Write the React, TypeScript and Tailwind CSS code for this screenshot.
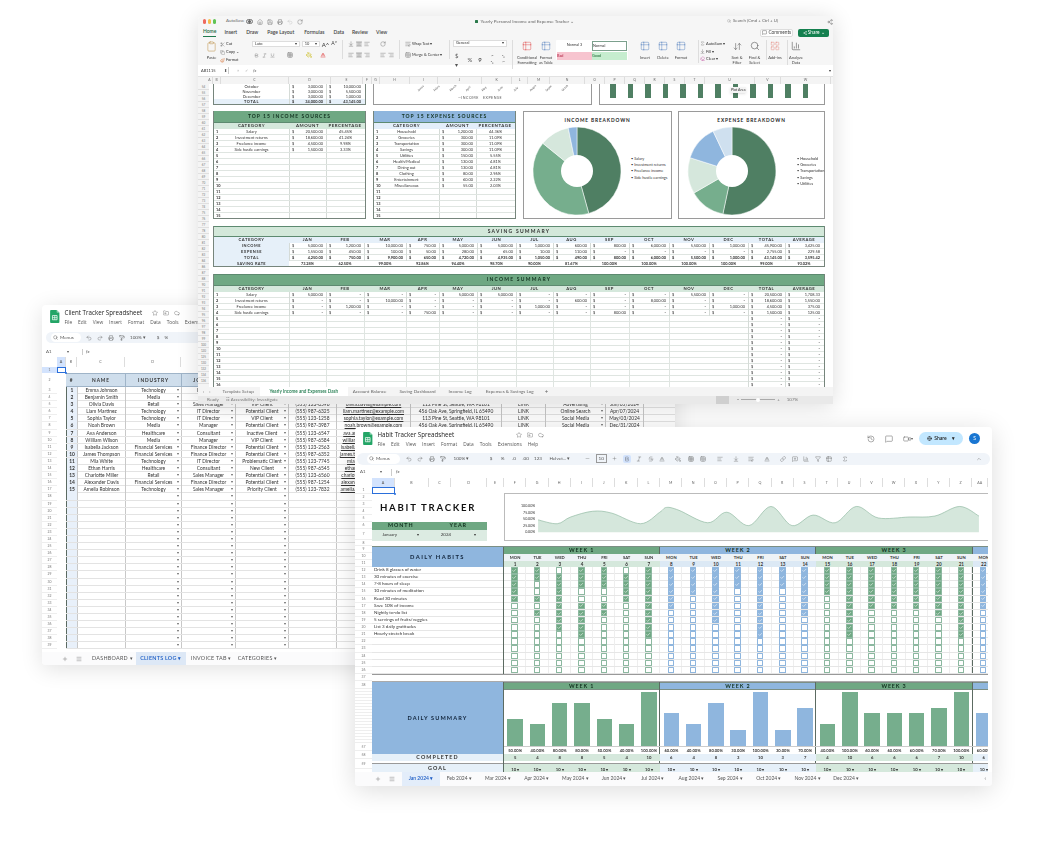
import {
  AlignCenter, AlignLeft, AlignRight, ArrowDownToLine, Baseline, Bold, ChartColumn, ChevronUp, Clipboard, Cloud, Copy, Eraser,
  Filter, FolderInput, Grid3x3, History, House, Italic, Link, Menu, MessageSquare, MessageSquarePlus, Minus, PaintBucket,
  PaintRoller, Paintbrush, Plus, Printer, Redo2, RotateCw, Save, Scissors, Search, Share2, Sigma, Star,
  Strikethrough, Table2, TableCellsMerge, Undo2, Video, WrapText, Check, Globe, ArrowDownUp, LayoutGrid, Underline,
} from "lucide-react";
import React from "react";

const pieSlice = (cx: number, cy: number, r: number, a: number, b: number) => {
  const pt = (d: number) => {
    const t = ((d - 90) * Math.PI) / 180;
    return `${cx + r * Math.cos(t)} ${cy + r * Math.sin(t)}`;
  };
  return `M${cx} ${cy}L${pt(a)}A${r} ${r} 0 ${b - a > 180 ? 1 : 0} 1 ${pt(b)}Z`;
};

// catmull-rom through the points of the area chart
const smooth = (p: number[][]) => {
  let d = `M${p[0][0]} ${p[0][1]}`;
  for (let i = 0; i < p.length - 1; i++) {
    const a = p[Math.max(i - 1, 0)], b = p[i], c = p[i + 1], e = p[Math.min(i + 2, p.length - 1)];
    d += `C${b[0] + (c[0] - a[0]) / 6} ${b[1] + (c[1] - a[1]) / 6} ${c[0] - (e[0] - b[0]) / 6} ${c[1] - (e[1] - b[1]) / 6} ${c[0]} ${c[1]}`;
  }
  return d;
};

function SheetsLogo({ className }: { className: string }) {
  return (
    <svg viewBox="0 0 20 28" className={className}>
      <path d="M2 0h12l6 6v20a2 2 0 0 1-2 2H2a2 2 0 0 1-2-2V2a2 2 0 0 1 2-2z" fill="#23a566" />
      <path d="M14 0l6 6h-4a2 2 0 0 1-2-2z" fill="#8ed1b1" />
      <path d="M5 12h10v9H5z" fill="none" stroke="#fff" strokeWidth="1.6" />
      <path d="M10 12v9M5 16.5h10" stroke="#fff" strokeWidth="1.4" />
    </svg>
  );
}

function Money({ v, b }: { v?: string; b?: boolean }) {
  return (
    <div className={`flex justify-between border-l border-[#d5dbd7] px-[2px] ${b ? "font-bold" : ""}`}>
      <span>$</span>
      <span className="pr-[1px]">{v ?? "-"}</span>
    </div>
  );
}

const excelCols: [string, number][] = [["A", 6], ["B", 8], ["C", 68], ["D", 42], ["E", 32], ["F", 9], ["G", 8], ["H", 30], ["I", 28], ["J", 44], ["K", 30], ["L", 16], ["M", 22], ["N", 35], ["O", 20], ["P", 20], ["Q", 20], ["R", 20], ["S", 20], ["T", 20], ["U", 50], ["V", 26], ["W", 50]];
const excelRows = [54, 55, 56, 57, 58, 59, 60, 61, 62, 63, 64, 65, 66, 67, 68, 69, 70, 71, 72, 73, 74, 75, 76, 77, 78, 80, 81, 82, 83, 84, 86, 87, 88, 90, 91, 92, 93, 94, 95, 96, 97, 98, 99, 100, 120, 125, 130, 132, 134, 136];
const months = ["JAN", "FEB", "MAR", "APR", "MAY", "JUN", "JUL", "AUG", "SEP", "OCT", "NOV", "DEC"];
const summaryGrid = "grid grid-cols-[75px_37px_38px_42px_33px_38px_39px_37px_37px_39px_40px_40px_39px_37px_38px]";
const rowLine = "h-[6px] border-b border-[#dfe5e1] leading-[5.5px]";

const incomeTop = [["Salary", "20,500.00", "45.45%"], ["Investment returns", "18,600.00", "41.24%"], ["Freelance income", "4,500.00", "9.98%"], ["Side hustle earnings", "1,500.00", "3.33%"]];
const expenseTop = [["Household", "1,200.00", "44.36%"], ["Groceries", "300.00", "11.09%"], ["Transportation", "300.00", "11.09%"], ["Savings", "300.00", "11.09%"], ["Utilities", "150.00", "5.55%"], ["Health/Medical", "130.00", "4.81%"], ["Dining out", "130.00", "4.81%"], ["Clothing", "80.00", "2.96%"], ["Entertainment", "60.00", "2.22%"], ["Miscellaneous", "55.00", "2.03%"]];

const savingRows: [string, string[]][] = [
  ["INCOME", ["5,000.00", "1,200.00", "10,000.00", "750.00", "5,000.00", "5,000.00", "1,000.00", "600.00", "800.00", "6,000.00", "5,500.00", "1,000.00", "45,900.00", "3,425.00"]],
  ["EXPENSE", ["1,550.00", "450.00", "100.00", "50.00", "280.00", "65.00", "10.00", "110.00", "-", "-", "-", "-", "2,755.00", "229.58"]],
  ["TOTAL", ["4,250.00", "750.00", "9,900.00", "650.00", "4,720.00", "4,935.00", "1,050.00", "490.00", "800.00", "6,000.00", "5,500.00", "1,000.00", "43,145.00", "3,595.42"]],
];
const savingRate = ["73.28%", "62.50%", "99.00%", "92.86%", "94.40%", "98.70%", "90.00%", "81.67%", "100.00%", "100.00%", "100.00%", "100.00%", "99.00%", "93.02%"];
const incomeRows: [string, Record<number, string>][] = [
  ["Salary", { 0: "5,000.00", 4: "5,000.00", 5: "5,000.00", 10: "5,500.00", 12: "20,500.00", 13: "1,708.33" }],
  ["Investment returns", { 2: "10,000.00", 7: "600.00", 9: "8,000.00", 12: "18,600.00", 13: "1,550.00" }],
  ["Freelance income", { 1: "1,200.00", 6: "1,000.00", 11: "1,000.00", 12: "4,500.00", 13: "375.00" }],
  ["Side hustle earnings", { 3: "750.00", 8: "800.00", 12: "1,500.00", 13: "125.00" }],
];

function TopTable({ title, rows, wide, blue }: { title: string; rows: string[][]; wide?: boolean; blue?: boolean }) {
  const cols = wide ? "grid grid-cols-[75px_37px_38px]" : "grid grid-cols-[65px_37px_38px]";
  return (
    <div className={`h-[108px] shrink-0 overflow-hidden border-x-[1.5px] border-b-[1.5px] border-[#76857c] ${wide ? "w-[153px]" : "w-[143px]"}`}>
      <div className={`flex h-[12px] items-center justify-center border-b border-[#5d8a70] text-[5px] font-bold tracking-[0.2em] text-[#12321f] ${blue ? "bg-[#8fb6de]" : "bg-[#6fa883]"}`}>{title}</div>
      <div className={`${cols} h-[5.5px] text-center text-[4.4px] font-bold leading-[5.5px] tracking-[0.12em] text-[#333] ${blue ? "bg-[#e3eefa]" : "bg-[#d5e8dc]"}`}>
        <div>CATEGORY</div><div>AMOUNT</div><div>PERCENTAGE</div>
      </div>
      {Array.from({ length: 15 }, (_, i) => (
        <div key={i} className={`${cols} ${rowLine}`}>
          <div className="relative text-center">
            <span className="absolute left-[2px] font-bold">{i + 1}</span>
            {rows[i]?.[0] ?? ""}
          </div>
          {rows[i] ? <Money v={rows[i][1]} /> : <div className="border-l border-[#d5dbd7]" />}
          <div className="border-l border-[#d5dbd7] text-center">{rows[i]?.[2] ?? ""}</div>
        </div>
      ))}
    </div>
  );
}

function Pie({ title, cx, slices, legend, wide }: { title: string; cx: number; slices: [number, number, string][]; legend: string[]; wide: number }) {
  return (
    <div className="relative h-[108px] shrink-0 border-[1.5px] border-[#9a9a9a] bg-white" style={{ width: wide }}>
      <div className="pt-[5px] text-center text-[4.8px] font-bold tracking-[0.18em] text-[#222]">{title}</div>
      <svg viewBox="0 0 92 92" className="absolute left-[7px] top-[13px] h-[92px] w-[92px]">
        {slices.map(([a, b, c], i) => (
          <path key={i} d={pieSlice(46, 46, 44, a, b)} fill={c} stroke="#fff" strokeWidth="0.5" />
        ))}
        <circle cx="46" cy="46" r="16" fill="#fff" />
      </svg>
      <div className="absolute top-[44px] whitespace-nowrap text-[3.8px] leading-[6.2px] text-[#333]" style={{ left: cx }}>
        {legend.map((l) => <div key={l}>• {l}</div>)}
      </div>
    </div>
  );
}

function SmallBtn({ icon: I, size = 6, cls = "" }: { icon: React.ElementType; size?: number; cls?: string }) {
  return <I size={size} strokeWidth={1.4} className={`shrink-0 text-[#555] ${cls}`} />;
}

function RibbonBig({ label, cls, children }: { label: string; cls: string; children: React.ReactNode }) {
  return (
    <div className={`flex shrink-0 flex-col items-center text-center text-[4px] leading-[5px] text-[#444] ${cls}`}>
      <div className="flex h-[12px] items-center justify-center">{children}</div>
      <div className="mt-[3px]">{label}</div>
    </div>
  );
}

function Excel() {
  return (
    <div className="absolute left-[198px] top-[16px] z-10 h-[388px] w-[635px] overflow-hidden rounded-t-[5px] bg-white [font-family:Lato,sans-serif] text-[3.9px] text-[#333] shadow-[0_2px_22px_rgba(0,0,0,0.14)] blur-[0.4px]">
      {/* title bar */}
      <div className="relative flex h-[11px] items-center whitespace-nowrap bg-[#f6f6f6] pl-[5px] text-[4.4px] text-[#666]">
        <span className="size-[5px] rounded-full bg-[#ee6a5e]" />
        <span className="ml-[2.5px] size-[5px] rounded-full bg-[#f5bd4f]" />
        <span className="ml-[2.5px] size-[5px] rounded-full bg-[#61c454]" />
        <span className="ml-[10px]">AutoSave</span>
        <span className="ml-[2px] flex h-[5px] w-[10px] items-center justify-end rounded-full border border-[#777] bg-[#eee] pr-[0.5px]"><span className="size-[3.5px] rounded-full bg-[#666]" /></span>
        <div className="ml-[4px] flex gap-[4px]">
          <SmallBtn icon={House} /><SmallBtn icon={Save} /><SmallBtn icon={Printer} /><SmallBtn icon={Undo2} cls="opacity-40" /><SmallBtn icon={RotateCw} />
        </div>
        <div className="ml-[172px] flex w-[106px] shrink-0 items-center gap-[2px] text-[4.6px]">
          <span className="size-[3.5px] shrink-0 rounded-[0.5px] bg-[#2b7a4b]" />Yearly Personal Income and Expense Tracker ⌄
        </div>
        <div className="ml-[146px] flex w-[70px] shrink-0 items-center gap-[2px]"><SmallBtn icon={Search} size={4} />Search (Cmd + Ctrl + U)</div>
        <SmallBtn icon={Share2} cls="ml-[30px]" />
      </div>
      {/* ribbon tabs */}
      <div className="flex h-[11px] items-center whitespace-nowrap bg-[#f6f6f6] pl-[5px] text-[5px] font-semibold text-[#444]">
        <span className="border-b border-[#1f7a4d] pb-[0.5px] text-[#1f6a45]">Home</span>
        <span className="ml-[8px]">Insert</span><span className="ml-[9px]">Draw</span><span className="ml-[9px]">Page Layout</span>
        <span className="ml-[10px]">Formulas</span><span className="ml-[9px]">Data</span><span className="ml-[8px]">Review</span><span className="ml-[8px]">View</span>
        <span className="ml-[373px] flex h-[8px] w-[33px] items-center justify-center gap-[1px] rounded-[2px] border border-[#ddd] bg-white text-[4.8px] font-normal"><MessageSquare size={5} />Comments</span>
        <span className="ml-[5px] flex h-[8px] w-[31px] items-center justify-center gap-[1px] rounded-[2px] bg-[#14804f] text-[4.8px] font-normal text-white"><Share2 size={4} />Share ⌄</span>
      </div>
      {/* ribbon */}
      <div className="flex h-[27px] items-start bg-[#f6f6f6] pl-[5px] pt-[2px]">
        <RibbonBig label="Paste" cls="w-[17px]"><Clipboard size={11} strokeWidth={1} className="text-[#b5812f]" /></RibbonBig>
        <div className="w-[26px] shrink-0 text-[4px] leading-[8px]">
          <div className="flex items-center gap-[1px]"><SmallBtn icon={Scissors} size={5} />Cut</div>
          <div className="flex items-center gap-[1px]"><SmallBtn icon={Copy} size={5} />Copy ⌄</div>
          <div className="flex items-center gap-[1px]"><Paintbrush size={5} className="text-[#d9773d]" />Format</div>
        </div>
        <div className="ml-[6px] w-[91px] shrink-0 border-r border-[#ddd] pr-[5px]">
          <div className="flex h-[8px] items-center gap-[2px]">
            <span className="flex h-[6.5px] w-[48px] items-center justify-between border border-[#ddd] bg-white px-[2px]">Lato<span>▾</span></span>
            <span className="flex h-[6.5px] w-[18px] items-center justify-between border border-[#ddd] bg-white px-[2px]">10<span>▾</span></span>
            <span className="text-[6px]">A^</span><span className="text-[5px]">A˅</span>
          </div>
          <div className="mt-[3px] flex h-[8px] items-center gap-[3px] pl-[2px]">
            <SmallBtn icon={Bold} size={5} /><SmallBtn icon={Italic} size={5} /><SmallBtn icon={Underline} size={5} /><SmallBtn icon={Grid3x3} size={6} cls="ml-[9px]" />
            <PaintBucket size={6} className="ml-[10px] text-[#c6b400]" /><Baseline size={6} className="ml-[5px] text-[#d33]" />
          </div>
        </div>
        <div className="ml-[5px] w-[52px] shrink-0 border-r border-[#ddd]">
          <div className="flex h-[8px] items-center gap-[2px]">
            <SmallBtn icon={ArrowDownToLine} size={6} /><span className="bg-[#ddd]"><SmallBtn icon={AlignCenter} size={6} /></span><SmallBtn icon={AlignLeft} size={6} /><SmallBtn icon={RotateCw} size={6} cls="ml-[8px] text-[#3d6fb5]" />
          </div>
          <div className="mt-[3px] flex h-[8px] items-center gap-[2px]">
            <SmallBtn icon={AlignLeft} size={6} /><span className="bg-[#ddd]"><SmallBtn icon={AlignCenter} size={6} /></span><SmallBtn icon={AlignRight} size={6} /><SmallBtn icon={AlignLeft} size={6} cls="ml-[8px]" /><SmallBtn icon={AlignRight} size={6} />
          </div>
        </div>
        <div className="ml-[5px] w-[45px] shrink-0 whitespace-nowrap border-r border-[#ddd] leading-[8px]">
          <div className="flex h-[8px] items-center gap-[1px]"><SmallBtn icon={WrapText} size={6} />Wrap Text ▾</div>
          <div className="mt-[3px] flex h-[8px] items-center gap-[1px]"><SmallBtn icon={TableCellsMerge} size={6} cls="text-[#3d6fb5]" />Merge &amp; Center ▾</div>
        </div>
        <div className="ml-[3px] w-[60px] shrink-0 border-r border-[#ddd] pr-[5px]">
          <div className="flex h-[6.5px] items-center justify-between border border-[#ddd] bg-white px-[2px]">General<span>▾</span></div>
          <div className="mt-[4px] flex items-center gap-[6px] pl-[2px] text-[6px] text-[#555]"><span>$ ▾</span><span>%</span><b>9</b><span className="ml-[3px] text-[4px]">⁺⁰ ⁰₀</span><span className="text-[4px]">⁰₀ ⁺⁰</span></div>
        </div>
        <RibbonBig label="Conditional Formatting" cls="ml-[3px] w-[22px]"><Table2 size={10} strokeWidth={1} className="text-[#d33]" /></RibbonBig>
        <RibbonBig label="Format as Table" cls="w-[16px]"><Table2 size={10} strokeWidth={1} className="text-[#3d6fb5]" /></RibbonBig>
        <div className="ml-[2px] grid h-[20px] w-[72px] shrink-0 grid-cols-2 gap-y-[1px] rounded-[1px] bg-white p-[1px] text-center text-[3.8px] leading-[8px]">
          <div>Normal 3</div><div className="border border-[#7ca08d] text-left">Normal</div>
          <div className="bg-[#f7c4cf] text-left text-[#b02040]">Bad</div><div className="bg-[#c6edcf] text-left text-[#1f6a35]">Good</div>
        </div>
        <RibbonBig label="Insert" cls="ml-[9px] w-[16px]"><Table2 size={10} strokeWidth={1} className="text-[#3d6fb5]" /></RibbonBig>
        <RibbonBig label="Delete" cls="ml-[2px] w-[16px]"><Table2 size={10} strokeWidth={1} className="text-[#3d6fb5]" /></RibbonBig>
        <RibbonBig label="Format" cls="ml-[2px] w-[16px]"><Table2 size={10} strokeWidth={1} className="text-[#3d6fb5]" /></RibbonBig>
        <div className="ml-[9px] w-[28px] shrink-0 whitespace-nowrap border-l border-[#ddd] pl-[1px] text-[4px] leading-[7.5px]">
          <div className="flex items-center gap-[1px]"><SmallBtn icon={Sigma} size={5} />AutoSum ▾</div>
          <div className="flex items-center gap-[1px]"><SmallBtn icon={ArrowDownToLine} size={5} />Fill ▾</div>
          <div className="flex items-center gap-[1px]"><Eraser size={5} className="text-[#c050a0]" />Clear ▾</div>
        </div>
        <RibbonBig label="Sort &amp; Filter" cls="ml-[4px] w-[14px]"><SmallBtn icon={ArrowDownUp} size={9} /></RibbonBig>
        <RibbonBig label="Find &amp; Select" cls="ml-[4px] w-[13px]"><SmallBtn icon={Search} size={10} /></RibbonBig>
        <RibbonBig label="Add-ins" cls="ml-[5px] w-[17px] border-l border-[#ddd]"><LayoutGrid size={10} strokeWidth={1} className="text-[#e2766a]" /></RibbonBig>
        <RibbonBig label="Analyze Data" cls="ml-[4px] w-[17px] border-l border-[#ddd]"><SmallBtn icon={ChartColumn} size={10} /></RibbonBig>
      </div>
      {/* formula bar */}
      <div className="flex h-[12px] items-center border-b border-[#e2e2e2] bg-white pl-[2px] text-[4px]">
        <span className="flex h-[7px] w-[29px] items-center justify-between border-r border-[#ccc] px-[1px]">AB1115 <span>⬍</span></span>
        <span className="ml-[8px] text-[#aaa]">×</span><span className="ml-[6px] text-[#aaa]">✓</span><span className="ml-[5px] italic text-[#666]">fx</span>
        <span className="ml-auto pr-[2px]">▾</span>
      </div>
      {/* column letters */}
      <div className="flex h-[7px] bg-[#f4f4f4] pl-[9px] text-center text-[3.4px] leading-[7px] text-[#666]">
        {excelCols.map(([c, w]) => <div key={c} className="shrink-0 border-r border-[#ddd]" style={{ width: w }}>{c}</div>)}
      </div>
      {/* sheet */}
      <div className="flex h-[303px] overflow-hidden bg-white">
        <div className="w-[11px] shrink-0 bg-[#f4f4f4] text-center text-[3px] leading-[6px] text-[#777]">
          {excelRows.map((n) => <div key={n} className="h-[6px] border-b border-[#e0e0e0]">{n}</div>)}
        </div>
        <div className="w-[616px] shrink-0 pl-[4px]">
          <div className="flex h-[21px]">
            <div className="w-[153px] shrink-0 border-x-[1.5px] border-b-[1.5px] border-[#76857c]">
              {[["October", "3,000.00", "10,000.00"], ["November", "3,000.00", "5,500.00"], ["December", "3,000.00", "1,000.00"]].map((r) => (
                <div key={r[0]} className="grid h-[5px] grid-cols-[75px_37px_38px] leading-[5px]">
                  <div className="text-center">{r[0]}</div><Money v={r[1]} /><Money v={r[2]} />
                </div>
              ))}
              <div className="grid h-[5px] grid-cols-[75px_37px_38px] bg-[#e6f0f9] font-bold leading-[5px]">
                <div className="text-center tracking-[0.15em]">TOTAL</div><Money v="34,000.00" b /><Money v="43,145.00" b />
              </div>
            </div>
            <div className="ml-[7px] flex w-[219px] shrink-0 flex-col border-x-[1.5px] border-b-[1.5px] border-[#999]">
              <div className="flex h-[9px] justify-end gap-[9px] overflow-hidden pr-[22px] pt-[2px] text-[3px] text-[#555]">
                {["January", "February", "March", "April", "May", "June", "July", "August", "September", "October"].map((m) => <span key={m} className="inline-block w-[7px] -rotate-45 whitespace-nowrap">{m.slice(0, 5)}</span>)}
              </div>
              <div className="mt-[2px] pl-[84px] text-[3.6px] tracking-[0.14em] text-[#555]">—INCOME&nbsp;&nbsp;&nbsp;EXPENSE</div>
            </div>
            <div className="relative ml-[7px] flex w-[226px] shrink-0 justify-between border-x-[1.5px] border-b-[1.5px] border-[#999] pl-[10px] pr-[16px]">
              {Array.from({ length: 12 }, (_, i) => <div key={i} className="h-[14px] w-[5.5px] bg-[#4f7f63]" />)}
              <div className="absolute left-[130px] top-[3px] whitespace-nowrap bg-[#f4f4f4] px-[1px] text-[3.6px] leading-[6px] shadow-sm">Plot Area</div>
            </div>
          </div>
          <div className="mt-[6px] flex">
            <TopTable title="TOP 15 INCOME SOURCES" rows={incomeTop} wide />
            <div className="ml-[7px]"><TopTable title="TOP 15 EXPENSE SOURCES" rows={expenseTop} blue /></div>
            <div className="ml-[7px]">
              <Pie title="INCOME BREAKDOWN" cx={107} wide={149} legend={["Salary", "Investment returns", "Freelance income", "Side hustle earnings"]} slices={[[0, 164.5, "#4f7f63"], [164.5, 309, "#76ae8d"], [309, 348.5, "#d5e7dc"], [348.5, 360, "#8fb6de"]]} />
            </div>
            <div className="ml-[6px]">
              <Pie title="EXPENSE BREAKDOWN" cx={118} wide={147} legend={["Household", "Groceries", "Transportation", "Savings", "Utilities"]} slices={[[0, 192, "#4f7f63"], [192, 240, "#76ae8d"], [240, 287.6, "#d5e7dc"], [287.6, 334.6, "#8fb6de"], [334.6, 360, "#cfe0ef"]]} />
            </div>
          </div>
          {/* saving summary */}
          <div className="mt-[7px] h-[41px] w-[612px] overflow-hidden border-x-[1.5px] border-b-[1.5px] border-[#76857c]">
            <div className="flex h-[11px] items-center justify-center border-y border-[#5d8a70] bg-[#d3e8da] text-[5px] font-bold tracking-[0.25em] text-[#333]">SAVING SUMMARY</div>
            <div className={`${summaryGrid} h-[6px] bg-[#e6f0f9] text-center text-[4.2px] font-bold leading-[6px] tracking-[0.12em]`}>
              <div>CATEGORY</div>{months.map((m) => <div key={m}>{m}</div>)}<div>TOTAL</div><div>AVERAGE</div>
            </div>
            {savingRows.map(([n, vals]) => (
              <div key={n} className={`${summaryGrid} ${rowLine}`}>
                <div className="bg-[#e6f0f9] text-center font-bold tracking-[0.15em]">{n}</div>
                {vals.map((v, i) => <Money key={i} v={v} b={n === "TOTAL"} />)}
              </div>
            ))}
            <div className={`${summaryGrid} ${rowLine} font-bold`}>
              <div className="bg-[#e6f0f9] text-center tracking-[0.1em]">SAVING RATE</div>
              {savingRate.map((v, i) => <div key={i} className="text-center">{v}</div>)}
            </div>
          </div>
          {/* income summary */}
          <div className="mt-[7px] h-[113px] w-[612px] overflow-hidden border-x-[1.5px] border-[#76857c]">
            <div className="flex h-[12px] items-center justify-center border-y border-[#5d8a70] bg-[#6fa883] text-[5px] font-bold tracking-[0.25em] text-[#12321f]">INCOME SUMMARY</div>
            <div className={`${summaryGrid} h-[6px] bg-[#d5e8dc] text-center text-[4.2px] font-bold leading-[6px] tracking-[0.12em]`}>
              <div>CATEGORY</div>{months.map((m) => <div key={m}>{m}</div>)}<div>TOTAL</div><div>AVERAGE</div>
            </div>
            {Array.from({ length: 16 }, (_, i) => {
              const r = incomeRows[i];
              return (
                <div key={i} className={`${summaryGrid} ${rowLine}`}>
                  <div className="relative text-center"><span className="absolute left-[2px] font-bold">{i + 1}</span>{r?.[0]}</div>
                  {Array.from({ length: 14 }, (_, c) =>
                    r || c > 11 ? <Money key={c} v={r?.[1][c]} /> : <div key={c} className={c === 11 ? "" : "border-l border-[#dfe5e1]"} />,
                  )}
                </div>
              );
            })}
          </div>
        </div>
      </div>
      {/* sheet tabs */}
      <div className="flex h-[9px] items-center whitespace-nowrap bg-[#f4f4f4] pl-[5px] text-[4.6px] text-[#666]">
        <span>‹</span><span className="ml-[5px]">›</span>
        <span className="ml-[12px]">Template Setup</span>
        <span className="ml-[6px] flex h-full w-[88px] items-center justify-center bg-white font-semibold text-[#1f7a4d]">Yearly Income and Expenses Dash</span>
        <span className="ml-[5px]">Account Balance</span><span className="ml-[13px]">Saving Dashboard</span>
        <span className="ml-[13px]">Income Log</span><span className="ml-[14px]">Expenses &amp; Savings Log</span>
        <span className="ml-[11px] text-[6px]">+</span>
      </div>
      {/* status bar */}
      <div className="flex h-[8px] items-center whitespace-nowrap bg-[#e9e9e9] pl-[9px] text-[4.4px] text-[#777]">
        <span>Ready</span>
        <span className="ml-[7px]">☷ Accessibility: Investigate</span>
        <span className="ml-[438px] h-full w-[13px] bg-[#cfcfcf]" />
        <span className="ml-[8px] flex items-center"><span>−</span><span className="mx-[2px] flex h-[1px] w-[34px] items-center justify-center bg-[#aaa]"><span className="size-[4px] rounded-full bg-white" /></span><span>+</span></span>
        <span className="ml-[7px]">107%</span>
      </div>
    </div>
  );
}

const clients: string[][] = [
  ["Emma Johnson", "Technology", "IT Director", "VIP Client", "(555) 123-4567", "emma.johnson@example.com", "789 Elm St, Denver, CO 80201", "LINK", "Referral", "Jan/15/2024"],
  ["Benjamin Smith", "Media", "Manager", "VIP Client", "(555) 987-6543", "ben.smith@example.com", "789 Elm St, Denver, CO 80201", "LINK", "Referral", "Feb/11/2024"],
  ["Olivia Davis", "Retail", "Sales Manager", "VIP Client", "(555) 123-8596", "olivia.davis@example.com", "112 Pine St, Seattle, WA 98101", "LINK", "Advertising", "Jun/05/2024"],
  ["Liam Martinez", "Technology", "IT Director", "Potential Client", "(555) 987-6325", "liam.martinez@example.com", "456 Oak Ave, Springfield, IL 65490", "LINK", "Online Search", "Apr/07/2024"],
  ["Sophia Taylor", "Technology", "IT Director", "VIP Client", "(555) 123-1258", "sophia.taylor@example.com", "113 Pine St, Seattle, WA 98101", "LINK", "Social Media", "May/03/2024"],
  ["Noah Brown", "Media", "Manager", "Potential Client", "(555) 987-3987", "noah.brown@example.com", "456 Oak Ave, Springfield, IL 65490", "LINK", "Social Media", "Dec/31/2024"],
  ["Ava Anderson", "Healthcare", "Consultant", "Inactive Client", "(555) 123-6547", "ava.anderson@example.com", "", "LINK", "", ""],
  ["William Wilson", "Media", "Manager", "VIP Client", "(555) 987-6584", "william.wilson@example.com", "", "", "", ""],
  ["Isabella Jackson", "Financial Services", "Finance Director", "Potential Client", "(555) 123-2563", "isabella.jackson@example.com", "", "", "", ""],
  ["James Thompson", "Financial Services", "Finance Director", "Potential Client", "(555) 987-6352", "james.thompson@example.com", "", "", "", ""],
  ["Mia White", "Technology", "IT Director", "Problematic Client", "(555) 123-7745", "mia.white@example.com", "", "", "", ""],
  ["Ethan Harris", "Healthcare", "Consultant", "New Client", "(555) 987-6545", "ethan.harris@example.com", "", "", "", ""],
  ["Charlotte Miller", "Retail", "Sales Manager", "Potential Client", "(555) 123-6560", "charlotte.miller@example.com", "", "", "", ""],
  ["Alexander Davis", "Financial Services", "Finance Director", "Potential Client", "(555) 987-1254", "alexander.davis@example.com", "", "", "", ""],
  ["Amelia Robinson", "Technology", "Sales Manager", "Priority Client", "(555) 123-7832", "amelia.robinson@example.com", "", "", "", ""],
];
const clientGrid = "grid grid-cols-[11px_48px_56px_54px_53px_48px_74px_91px_44px_60px_38px_30px]";
const clientLetters: [string, number][] = [["A", 9], ["B", 11], ["C", 48], ["D", 56], ["E", 54], ["F", 53], ["G", 48], ["H", 74], ["I", 91], ["J", 44], ["K", 60], ["L", 38], ["M", 30]];

function Drop({ t }: { t: string }) {
  return (
    <div className="relative border-l border-[#c8c8c8] text-center">
      {t}<span className="absolute right-[2px] top-0 text-[3.6px] text-[#666]">▾</span>
    </div>
  );
}

function SheetsTop({ title, gap }: { title: string; gap: string }) {
  const menu = ["File", "Edit", "View", "Insert", "Format", "Data", "Tools", "Extensions", "Help"];
  return (
    <div className="min-w-0">
      <div className="flex items-center whitespace-nowrap [font-family:'Open_Sans',sans-serif] text-[6.2px] leading-[10px] text-[#222]">
        {title}
        <span className={`flex items-center gap-[5px] ${gap}`}><SmallBtn icon={Star} /><SmallBtn icon={FolderInput} /><SmallBtn icon={Cloud} /></span>
      </div>
      <div className="mt-[1px] flex gap-[6px] [font-family:'Open_Sans',sans-serif] text-[4.8px] leading-[7px] text-[#555]">
        {menu.map((m) => <span key={m}>{m}</span>)}
      </div>
    </div>
  );
}

function Client() {
  return (
    <div className="absolute left-[42px] top-[305px] z-0 flex h-[360px] w-[633px] flex-col overflow-hidden rounded-[4px] bg-white [font-family:Lato,sans-serif] text-[4.9px] text-[#333] shadow-[0_4px_22px_rgba(0,0,0,0.12)] blur-[0.4px]">
      <div className="flex h-[23px] shrink-0 items-center pl-[8px]">
        <SheetsLogo className="mr-[5px] h-[13px] w-[9.5px]" />
        <SheetsTop title="Client Tracker Spreadsheet" gap="ml-[10px]" />
      </div>
      <div className="flex h-[19px] shrink-0 items-center px-[4px]">
        <div className="flex h-[11px] w-full items-center gap-[5px] rounded-full bg-[#f0f4f9] pl-[5px] text-[4.6px] text-[#555]">
          <span className="flex h-[9px] w-[30px] items-center gap-[2px] rounded-full bg-white pl-[2px]"><Search size={5} />Menus</span>
          <SmallBtn icon={Undo2} /><SmallBtn icon={Redo2} /><SmallBtn icon={Printer} /><SmallBtn icon={PaintRoller} />
          <span>100% ▾</span><span className="ml-[6px]">$</span><span>%</span>
        </div>
      </div>
      <div className="flex h-[10px] shrink-0 items-center pl-[4px] text-[4.4px] text-[#555]">
        <span className="w-[32px]">A1 <span className="ml-[14px]">▾</span></span><span className="ml-[4px] border-l border-[#ccc] pl-[3px] italic">fx</span>
      </div>
      <div className="flex h-[10px] shrink-0 bg-white pl-[15px] text-center text-[3.6px] leading-[9px] text-[#666]">
        {clientLetters.map(([c, w]) => <div key={c} className={`shrink-0 border-r border-[#ddd] ${c === "A" ? "bg-[#d3e3fd] font-bold" : ""}`} style={{ width: w }}>{c}</div>)}
      </div>
      <div className="flex min-h-0 flex-1 overflow-hidden">
        <div className="w-[15px] shrink-0 text-center text-[3.4px] leading-[7px] text-[#777]">
          <div className="h-[6px] bg-[#d3e3fd] leading-[6px]">1</div>
          <div className="h-[14px] leading-[14px]">2</div>
          {Array.from({ length: 37 }, (_, i) => <div key={i} className="h-[7.1px] border-b border-[#eee]">{i + 3}</div>)}
        </div>
        <div className="relative min-w-0 flex-1">
          <div className="h-[6px] w-[9px] border border-[#2a6fdb]" />
          <div className="absolute left-[8px] top-[5px] size-[2px] rounded-full bg-[#2a6fdb]" />
          <div className="flex h-[14px]">
            <div className="w-[9px] shrink-0" />
            <div className={`${clientGrid} flex-1 border-y border-[#9fb4c8] bg-[#cfdeec] text-center text-[4.8px] font-bold leading-[13px] tracking-[0.18em] text-[#333]`}>
              <div>#</div><div>NAME</div><div className="border-l border-[#9fb4c8]">INDUSTRY</div><div className="border-l border-[#9fb4c8]">JOB TITLE</div><div className="border-l border-[#9fb4c8]">STATUS</div><div /><div /><div /><div /><div /><div /><div />
            </div>
          </div>
          {Array.from({ length: 37 }, (_, i) => {
            const r = clients[i];
            return (
              <div key={i} className={`${clientGrid} ml-[9px] h-[7.1px] border-b border-[#e3e3e3] leading-[6.6px]`}>
                <div className="border-l-[1.5px] border-[#5c6b62] bg-[#e8f0fa] text-center font-bold">{r ? i + 1 : ""}</div>
                <div className="border-l border-[#c8c8c8] text-center">{r?.[0]}</div>
                <Drop t={r?.[1] ?? ""} /><Drop t={r?.[2] ?? ""} /><Drop t={r?.[3] ?? ""} />
                <div className="border-l border-[#c8c8c8] text-center">{r?.[4]}</div>
                <div className="border-l border-[#c8c8c8] text-center underline">{r?.[5]}</div>
                <div className="whitespace-nowrap border-l border-[#c8c8c8] text-center">{r?.[6]}</div>
                <div className="border-l border-[#c8c8c8] text-center">{r?.[7]}</div>
                <Drop t={r?.[8] ?? ""} />
                <div className="border-l border-[#c8c8c8] text-center">{r?.[9]}</div>
                <div className="border-l border-[#c8c8c8]" />
              </div>
            );
          })}
        </div>
      </div>
      <div className="flex h-[13px] shrink-0 items-center bg-[#fbfbfc] pl-[20px] text-[5.4px] tracking-[0.05em] text-[#555]">
        <SmallBtn icon={Plus} /><SmallBtn icon={Menu} cls="ml-[8px]" />
        <span className="ml-[10px]">DASHBOARD ▾</span>
        <span className="ml-[3px] flex h-full w-[50px] items-center justify-center bg-[#dde8f6] font-semibold text-[#1a5bc4]">CLIENTS LOG ▾</span>
        <span className="ml-[5px]">INVOICE TAB ▾</span><span className="ml-[6px]">CATEGORIES ▾</span>
      </div>
    </div>
  );
}

const habitRowNums: [string, number][] = [
  ["1", 7], ["2", 7], ["3", 7], ["4", 7], ["5", 7], ["6", 7], ["7", 11], ["8", 6],
  ["9", 7], ["10", 7], ["11", 7.1], ...Array.from({ length: 15 }, (_, i): [string, number] => [String(i + 12), 7.13]),
  ["37", 7], ["38", 8], ...Array.from({ length: 18 }, (_, i): [string, number] => [String(i + 39), 3]),
  ["57", 8], ["58", 8], ["59", 10],
];
const habitList = ["Drink 8 glasses of water", "30 minutes of exercise", "7-8 hours of sleep", "10 minutes of meditation", "Read 30 minutes", "Save 10% of income", "Nightly to-do list", "5 servings of fruits/veggies", "List 3 daily gratitudes", "Hourly stretch break"];
const days = ["MON", "TUE", "WED", "THU", "FRI", "SAT", "SUN"];
const week1 = ["1101101", "1111111", "1011111", "1010011", "1110011", "0011101", "0111101", "0011001", "0011001", "0001001"];
const weekData = [
  { name: "WEEK 1", blue: false, start: 1, counts: [5, 4, 8, 8, 5, 4, 10], pct: ["50.00%", "40.00%", "80.00%", "80.00%", "50.00%", "40.00%", "100.00%"] },
  { name: "WEEK 2", blue: true, start: 8, counts: [6, 4, 8, 3, 10, 3, 7], pct: ["60.00%", "40.00%", "80.00%", "30.00%", "100.00%", "30.00%", "70.00%"] },
  { name: "WEEK 3", blue: false, start: 15, counts: [4, 10, 6, 6, 6, 7, 10], pct: ["40.00%", "100.00%", "60.00%", "60.00%", "60.00%", "70.00%", "100.00%"] },
  { name: "WEEK 4", blue: true, start: 22, counts: [6, 4, 7, 5, 6, 4, 8], pct: ["60.00%", "40.00%", "70.00%", "50.00%", "60.00%", "40.00%", "80.00%"] },
];
const dayGrid = "grid w-[156.2px] grid-cols-[repeat(7,22.3px)]";
const chartPts = [[24, 27], [44, 31], [58, 24], [81, 18], [101, 20], [131, 31], [151, 19], [158, 14], [171, 17], [201, 30], [221, 19], [244, 33], [267, 13], [289, 33], [311, 22], [334, 30], [356, 13], [379, 25], [411, 24], [438, 23], [464, 13], [484, 23]];

function WeekChecks({ w, idx }: { w: (typeof weekData)[number]; idx: number }) {
  const pale = w.blue ? "bg-[#dce9f5]" : "bg-[#d5e8dc]";
  return (
    <div className="w-[156.2px] shrink-0 border-r border-[#5c6b62]">
      <div className={`h-[7px] text-center text-[5.4px] font-bold leading-[7px] tracking-[0.16em] text-[#10301d] ${w.blue ? "bg-[#8fb6de]" : "bg-[#6fa883]"}`}>{w.name}</div>
      <div className={`${dayGrid} h-[7px] bg-[#eef3f6] text-center text-[4.2px] font-bold leading-[7px]`}>{days.map((d) => <div key={d}>{d}</div>)}</div>
      <div className={`${dayGrid} h-[6px] ${pale} text-center text-[4.6px] font-bold leading-[6px]`}>{days.map((_, i) => <div key={i}>{w.start + i}</div>)}</div>
      {Array.from({ length: 15 }, (_, r) => (
        <div key={r} className={`${dayGrid} h-[7.13px] border-b border-[#e6e6e6]`}>
          {days.map((_, d) => {
            const on = idx === 0 ? week1[r]?.[d] === "1" : r < w.counts[d];
            return (
              <div key={d} className="flex items-center justify-center border-r border-[#eee]">
                <span className={`flex size-[6.5px] items-center justify-center rounded-[0.5px] border-[0.6px] ${w.blue ? "border-[#8fb6de]" : "border-[#8cb8a0]"} ${on ? (w.blue ? "bg-[#8fb6de]" : "bg-[#6fa883]") : "bg-white"}`}>
                  {on && <Check size={5} strokeWidth={3} className="text-white" />}
                </span>
              </div>
            );
          })}
        </div>
      ))}
    </div>
  );
}

function WeekBars({ w }: { w: (typeof weekData)[number] }) {
  const color = w.blue ? "bg-[#8fb6de]" : "bg-[#76ae8d]";
  const pale = w.blue ? "bg-[#e6f0f9]" : "bg-[#d5e8dc]";
  return (
    <div className="w-[156.2px] shrink-0 border-r border-[#5c6b62]">
      <div className={`h-[8px] border-y border-[#7c8f84] text-center text-[5.4px] font-bold leading-[6.5px] tracking-[0.16em] text-[#10301d] ${w.blue ? "bg-[#8fb6de]" : "bg-[#6fa883]"}`}>{w.name}</div>
      <div className={`${dayGrid} h-[56px] items-end`}>
        {w.counts.map((c, i) => (
          <div key={i} className="flex h-full items-end justify-center">
            <div className={`w-[15.5px] ${color}`} style={{ height: c * 5.4 }} />
          </div>
        ))}
      </div>
      <div className={`${dayGrid} h-[8px] border-t border-[#ccc] text-center text-[4.1px] font-bold leading-[7.5px]`}>{w.pct.map((p, i) => <div key={i}>{p}</div>)}</div>
      <div className={`${dayGrid} h-[7.5px] ${pale} text-center text-[4.2px] font-bold leading-[7.5px]`}>{w.counts.map((c, i) => <div key={i}>{c}</div>)}</div>
      <div className={`${dayGrid} mt-[1.5px] h-[9px] border-t border-[#999] ${pale} pt-[2px] text-center text-[4.2px] font-bold leading-[7px]`}>{days.map((_, i) => <div key={i}>10 ▾</div>)}</div>
    </div>
  );
}

function Habit() {
  return (
    <div className="absolute left-[355px] top-[427px] z-20 flex h-[359px] w-[637px] flex-col overflow-hidden rounded-[4px] bg-white [font-family:Lato,sans-serif] text-[4.4px] text-[#333] shadow-[0_4px_26px_rgba(0,0,0,0.14)] blur-[0.4px]">
      <div className="flex h-[23px] shrink-0 items-center pl-[8px]">
        <SheetsLogo className="mr-[5px] h-[13px] w-[9.5px]" />
        <SheetsTop title="Habit Tracker Spreadsheet" gap="ml-[62px]" />
        <div className="ml-auto flex items-center pr-[12px] text-[#555]">
          <SmallBtn icon={History} size={8} /><SmallBtn icon={MessageSquare} size={8} cls="ml-[10px]" />
          <SmallBtn icon={Video} size={8} cls="ml-[10px]" /><span className="text-[4px]">▾</span>
          <span className="ml-[6px] flex h-[13px] w-[44px] items-center justify-center gap-[2px] rounded-full bg-[#c2e7ff] text-[5px] font-semibold text-[#222]"><Globe size={5} />Share <span className="ml-[3px]">▾</span></span>
          <span className="ml-[6px] flex size-[11px] items-center justify-center rounded-full bg-[#1976d2] text-[5px] text-white">S</span>
        </div>
      </div>
      <div className="flex h-[17px] shrink-0 items-center px-[2px]">
        <div className="flex h-[12px] w-full items-center gap-[5.5px] whitespace-nowrap rounded-full bg-[#f0f4f9] pl-[10px] pr-[8px] text-[4.6px] text-[#555]">
          <span className="flex h-[10px] w-[33px] shrink-0 items-center gap-[2px] rounded-full bg-white pl-[2px]"><Search size={5} />Menus</span>
          <SmallBtn icon={Undo2} /><SmallBtn icon={Redo2} /><SmallBtn icon={Printer} /><SmallBtn icon={PaintRoller} />
          <span className="ml-[2px] w-[24px]">100% ▾</span><span className="ml-[5px] w-[6px] text-center">$</span><span className="w-[6px] text-center">%</span><span className="w-[6px] text-center">.0</span><span className="w-[6px] text-center">.00</span><span className="w-[8px] text-center">123</span>
          <span className="ml-[2px] w-[28px]">Helvet... ▾</span>
          <SmallBtn icon={Minus} size={5} cls="ml-[2px]" /><span className="border border-[#999] px-[2px]">10</span><SmallBtn icon={Plus} size={5} />
          <span className="rounded-[2px] bg-[#d3e3fd] p-[1px]"><SmallBtn icon={Bold} size={6} /></span><SmallBtn icon={Italic} size={6} /><SmallBtn icon={Strikethrough} size={6} /><SmallBtn icon={Baseline} />
          <SmallBtn icon={PaintBucket} cls="ml-[4px]" /><SmallBtn icon={Grid3x3} cls="ml-[2px]" /><SmallBtn icon={TableCellsMerge} /><SmallBtn icon={AlignLeft} cls="ml-[6px]" /><SmallBtn icon={ArrowDownToLine} cls="ml-[4px]" /><SmallBtn icon={WrapText} cls="ml-[4px]" /><SmallBtn icon={Baseline} cls="ml-[4px]" />
          <SmallBtn icon={Link} cls="ml-[5px]" /><SmallBtn icon={MessageSquarePlus} /><SmallBtn icon={ChartColumn} /><SmallBtn icon={Filter} /><SmallBtn icon={Table2} /><SmallBtn icon={Sigma} cls="ml-[4px]" />
          <SmallBtn icon={ChevronUp} cls="ml-auto" />
        </div>
      </div>
      <div className="flex h-[11px] shrink-0 items-center pl-[5px] text-[4.4px] text-[#555]">
        <span className="w-[29px]">A1 <span className="ml-[13px]">▾</span></span><span className="ml-[2px] border-l border-[#ccc] pl-[4px] italic">fx</span>
      </div>
      <div className="flex h-[9px] shrink-0 pl-[17px] text-center text-[3.6px] leading-[9px] text-[#666]">
        {[["A", 23, true], ["B", 34], ["C", 22], ["D", 36], ["E", 17], ["F", 22.3], ["G", 22.3], ["H", 22.3], ["I", 22.3], ["J", 22.3], ["K", 22.3], ["L", 22.3], ["M", 22.3], ["N", 22.3], ["O", 22.3], ["P", 22.3], ["Q", 22.3], ["R", 22.3], ["S", 22.3], ["T", 22.3], ["U", 22.3], ["V", 22.3], ["W", 22.3], ["X", 22.3], ["Y", 22.3], ["Z", 22.3], ["AA", 16]].map(([c, w, on]) => (
          <div key={c as string} className={`shrink-0 border-r border-[#ddd] ${on ? "bg-[#d3e3fd] font-bold" : ""}`} style={{ width: w as number }}>{c as string}</div>
        ))}
      </div>
      <div className="flex min-h-0 flex-1 overflow-hidden">
        <div className="w-[17px] shrink-0 overflow-hidden text-center text-[3.4px] text-[#777]">
          {habitRowNums.map(([n, h]) => <div key={n} className="border-b border-[#eee]" style={{ height: h, lineHeight: `${h}px` }}>{h > 3 ? n : ""}</div>)}
        </div>
        <div className="w-[616px] shrink-0 overflow-hidden">
          {/* title and chart */}
          <div className="flex h-[59px]">
            <div className="w-[132px] shrink-0">
              <div className="relative h-[7px] w-[23px] border border-[#2a6fdb]"><span className="absolute -bottom-[1.5px] -right-[1.5px] size-[2px] rounded-full bg-[#2a6fdb]" /></div>
              <div className="flex h-[28px] items-center pl-[8px] text-[9.6px] font-bold tracking-[0.18em] text-[#111]">HABIT TRACKER</div>
              <div className="grid w-[115px] grid-cols-2 text-center">
                <div className="h-[7.5px] bg-[#6fa883] text-[5.4px] font-bold leading-[7.5px] tracking-[0.16em] text-[#10301d]">MONTH</div>
                <div className="h-[7.5px] bg-[#6fa883] text-[5.4px] font-bold leading-[7.5px] tracking-[0.16em] text-[#10301d]">YEAR</div>
                <div className="flex h-[11.5px] items-center justify-around bg-[#dcebe2]"><span>January</span><span>▾</span></div>
                <div className="flex h-[11.5px] items-center justify-around bg-[#dcebe2]"><span>2024</span><span>▾</span></div>
              </div>
            </div>
            <div className="mt-[6px] h-[48px] w-[484px] shrink-0 border-y border-l border-[#bbb]">
              <svg viewBox="0 0 484 48" className="block h-[46px] w-[484px]">
                <path d={`${smooth(chartPts)}L484 40L24 40Z`} fill="#d5e7dc" />
                <path d={smooth(chartPts)} fill="none" stroke="#8fb8a0" strokeWidth="0.7" />
                {["100.00%", "75.00%", "50.00%", "25.00%", "0.00%"].map((t, i) => (
                  <text key={t} x="21" y={14 + i * 6.8} textAnchor="end" fontSize="3.8" fill="#333" fontFamily="Lato,sans-serif">{t}</text>
                ))}
              </svg>
            </div>
          </div>
          {/* habits */}
          <div className="flex border-t border-[#7c8f84]">
            <div className="w-[132px] shrink-0 border-r border-[#5c6b62]">
              <div className="flex h-[20px] items-center justify-center bg-[#8fb6de] text-[5.8px] font-bold tracking-[0.24em] text-[#10233a]">DAILY HABITS</div>
              {Array.from({ length: 15 }, (_, i) => (
                <div key={i} className="h-[7.13px] border-b border-[#e6e6e6] pl-[2px] text-[4.5px] leading-[6.6px]">{habitList[i]}</div>
              ))}
            </div>
            {weekData.map((w, i) => <WeekChecks key={w.name} w={w} idx={i} />)}
          </div>
          <div className="h-[7px] border-t border-[#999]" />
          {/* summary */}
          <div className="flex border-t border-[#aaa]">
            <div className="w-[132px] shrink-0 border-r border-[#5c6b62]">
              <div className="flex h-[72px] items-center justify-center bg-[#8fb6de] text-[5.6px] font-bold tracking-[0.2em] text-[#10233a]">DAILY SUMMARY</div>
              <div className="h-[7.5px] bg-[#e6f0f9] text-center text-[5.4px] font-bold leading-[7.5px] tracking-[0.2em]">COMPLETED</div>
              <div className="mt-[1.5px] h-[9px] border-t border-[#999] bg-[#e6f0f9] pt-[1px] text-center text-[5.4px] font-bold leading-[7px] tracking-[0.2em]">GOAL</div>
            </div>
            {weekData.map((w) => <WeekBars key={w.name} w={w} />)}
          </div>
        </div>
      </div>
      <div className="flex h-[14px] shrink-0 items-center bg-[#fbfbfc] pl-[20px] text-[5px] text-[#555]">
        <SmallBtn icon={Plus} /><SmallBtn icon={Menu} cls="ml-[8px]" />
        <span className="ml-[7px] flex h-full w-[38px] items-center justify-center bg-[#e3edfa] font-semibold text-[#1a5bc4]">Jan 2024 ▾</span>
        {["Feb", "Mar", "Apr", "May", "Jun", "Jul", "Aug", "Sep", "Oct", "Nov", "Dec"].map((m) => (
          <span key={m} className="flex w-[38.7px] shrink-0 items-center justify-center">{m} 2024 ▾</span>
        ))}
        <span className="ml-auto pr-[6px]">‹</span>
      </div>
    </div>
  );
}

export default function App() {
  return (
    <div className="relative h-[855px] w-[1050px] overflow-hidden bg-white">
      <Client />
      <Excel />
      <Habit />
    </div>
  );
}
